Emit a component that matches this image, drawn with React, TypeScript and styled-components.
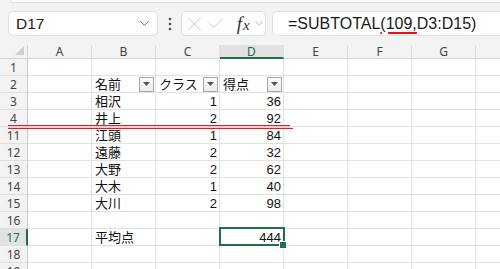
import styled, { createGlobalStyle } from "styled-components";
import { ChevronDown, X, Check } from "lucide-react";

const GlobalStyle = createGlobalStyle`
  html, body {
    margin: 0;
    padding: 0;
    background: #f3f3f3;
  }
  * {
    box-sizing: border-box;
  }
`;

type Row = {
  num: number;
  b?: string;
  c?: string;
  d?: string;
  header?: boolean;
  active?: boolean;
};

const rows: Row[] = [
  { num: 1 },
  { num: 2, b: "名前", c: "クラス", d: "得点", header: true },
  { num: 3, b: "相沢", c: "1", d: "36" },
  { num: 4, b: "井上", c: "2", d: "92" },
  { num: 11, b: "江頭", c: "1", d: "84" },
  { num: 12, b: "遠藤", c: "2", d: "32" },
  { num: 13, b: "大野", c: "2", d: "62" },
  { num: 14, b: "大木", c: "1", d: "40" },
  { num: 15, b: "大川", c: "2", d: "98" },
  { num: 16 },
  { num: 17, b: "平均点", d: "444", active: true },
  { num: 18 },
  { num: 19 },
];

// the last column (H) is mostly off-screen, its letter is not visible
const columns = ["A", "B", "C", "D", "E", "F", "G", ""];

export default function App() {
  return (
    <Page>
      <GlobalStyle />
      <RibbonEdge />
      <FormulaRow>
        <NameBox>
          <span>D17</span>
          <ChevronDown size={15} strokeWidth={1.4} color="#555" />
        </NameBox>
        <Dots viewBox="0 0 4 14" width={4} height={14}>
          <circle cx="2" cy="2" r="1.3" />
          <circle cx="2" cy="7" r="1.3" />
          <circle cx="2" cy="12" r="1.3" />
        </Dots>
        <FormulaTools>
          <X size={26} strokeWidth={0.95} color="#c4c4c4" />
          <Check size={21} strokeWidth={1.1} color="#c4c4c4" />
          <Fx>
            f<sub>x</sub>
          </Fx>
          <ChevronDown size={13} strokeWidth={1.4} color="#999" />
        </FormulaTools>
        <FormulaInput>
          =SUBTOTAL<Marked>(109,</Marked>D3:D15)
        </FormulaInput>
      </FormulaRow>

      <Sheet>
        <Corner>
          <svg width="9" height="9" viewBox="0 0 9 9">
            <polygon points="9,0 9,9 0,9" fill="#cfcfcf" />
          </svg>
        </Corner>
        {columns.map((col, i) => (
          <ColHeader key={i} $active={col === "D"}>
            {col}
          </ColHeader>
        ))}

        {rows.map((row) => (
          <RowFragment key={row.num} row={row} />
        ))}

        <HiddenRowsMark width="290" height="6" viewBox="0 0 290 6">
          <rect x="0" y="1" width="283" height="3" fill="#f6caca" />
          <line x1="0" y1="0.5" x2="282" y2="0.5" stroke="#e02020" />
          <line x1="0" y1="3.5" x2="285" y2="3.5" stroke="#e02020" />
        </HiddenRowsMark>
      </Sheet>
    </Page>
  );
}

function RowFragment({ row }: { row: Row }) {
  return (
    <>
      <RowHeader $active={row.active}>{row.num}</RowHeader>
      <Cell />
      <Cell>
        {row.b}
        {row.header && <FilterButton />}
      </Cell>
      <Cell $right={!row.header}>
        {row.c}
        {row.header && <FilterButton />}
      </Cell>
      <Cell $right={!row.header} $selected={row.active}>
        {row.d}
        {row.header && <FilterButton />}
      </Cell>
      <Cell />
      <Cell />
      <Cell />
      <Cell />
    </>
  );
}

function FilterButton() {
  return (
    <DropButton>
      <svg width="7" height="4" viewBox="0 0 7 4">
        <polygon points="0,0 7,0 3.5,4" fill="#555" />
      </svg>
    </DropButton>
  );
}

const Page = styled.div`
  width: 500px;
  height: 269px;
  overflow: hidden;
  background: #f3f3f3;
  font-family: "Liberation Sans", Arial, sans-serif;
`;

const RibbonEdge = styled.div`
  height: 3px;
  margin-left: 10px;
  background: #ffffff;
  border-left: 1px solid #dcdcdc;
  border-bottom: 1px solid #dcdcdc;
  border-bottom-left-radius: 4px;
`;

const FormulaRow = styled.div`
  display: flex;
  align-items: center;
  height: 42px;
  padding: 0 0 1px 8px;
`;

const NameBox = styled.div`
  display: flex;
  align-items: center;
  justify-content: space-between;
  width: 150px;
  height: 25px;
  padding: 0 5px 0 7px;
  background: #ffffff;
  border: 1px solid #dedede;
  border-radius: 5px;
  font-size: 15.5px;
  color: #1a1a1a;
`;

const Dots = styled.svg`
  fill: #4a4a4a;
  margin: 0 9px 0 10px;
`;

const FormulaTools = styled.div`
  display: flex;
  align-items: center;
  width: 85px;
  height: 25px;
  background: #ffffff;
  border: 1px solid #dedede;
  border-radius: 5px;

  svg:nth-child(2) {
    margin-left: -1px;
  }
`;

const Fx = styled.span`
  font-family: "Liberation Serif", "Times New Roman", serif;
  font-style: italic;
  font-size: 19px;
  color: #333333;
  margin: 0 3px 0 11px;
  line-height: 1;

  sub {
    font-size: 15px;
    vertical-align: 0;
    margin-left: 1px;
  }
`;

const FormulaInput = styled.div`
  flex: 1;
  height: 25px;
  margin-left: 6px;
  padding-left: 15px;
  display: flex;
  align-items: center;
  background: #ffffff;
  border: 1px solid #dedede;
  border-right: none;
  border-radius: 5px 0 0 5px;
  font-size: 16px;
  color: #1a1a1a;
  white-space: nowrap;
`;

const Marked = styled.span`
  text-decoration: underline;
  text-decoration-color: #e81010;
  text-decoration-thickness: 2px;
  text-underline-offset: 3px;
`;

const Sheet = styled.div`
  position: relative;
  display: grid;
  grid-template-columns: 28px repeat(8, 64px);
  grid-template-rows: 14px;
  grid-auto-rows: 17px;
  background: #ffffff;
`;

const Corner = styled.div`
  display: flex;
  align-items: flex-end;
  justify-content: flex-end;
  padding: 0 3px 3px 0;
  background: #f3f3f3;
  border-right: 1px solid #d4d4d4;
  border-bottom: 1px solid #d4d4d4;
`;

const ColHeader = styled.div<{ $active?: boolean }>`
  display: flex;
  align-items: center;
  justify-content: center;
  font-family: "Noto Sans", "Liberation Sans", sans-serif;
  font-size: 12px;
  color: ${(p) => (p.$active ? "#1e6e42" : "#444444")};
  background: ${(p) => (p.$active ? "#e2e2e2" : "#f3f3f3")};
  border-right: 1px solid #dedede;
  border-bottom: ${(p) => (p.$active ? "2px solid #1e7145" : "1px solid #d4d4d4")};
`;

const RowHeader = styled.div<{ $active?: boolean }>`
  display: flex;
  align-items: center;
  justify-content: center;
  padding-top: 1px;
  overflow: hidden;
  font-family: "Noto Sans", "Liberation Sans", sans-serif;
  font-size: 12px;
  color: ${(p) => (p.$active ? "#1e6e42" : "#444444")};
  background: ${(p) => (p.$active ? "#e2e2e2" : "#f3f3f3")};
  border-right: ${(p) => (p.$active ? "2px solid #1e7145" : "1px solid #c8c8c8")};
  border-bottom: 1px solid #dedede;
`;

const Cell = styled.div<{ $right?: boolean; $selected?: boolean }>`
  position: relative;
  display: flex;
  align-items: flex-end;
  justify-content: ${(p) => (p.$right ? "flex-end" : "flex-start")};
  padding: 0 2px 0 3px;
  font-family: "Liberation Sans", "Noto Sans CJK JP", sans-serif;
  font-size: 13px;
  line-height: 15px;
  color: #111111;
  white-space: nowrap;
  border-right: 1px solid #e1e1e1;
  border-bottom: 1px solid #e1e1e1;

  ${(p) =>
    p.$selected &&
    `
    &::after {
      content: "";
      position: absolute;
      top: -2px;
      left: -1px;
      right: -2px;
      bottom: -1px;
      border: 2px solid #1e7145;
      pointer-events: none;
    }
    &::before {
      content: "";
      position: absolute;
      right: -4px;
      bottom: -4px;
      width: 6px;
      height: 6px;
      background: #1e7145;
      border: 1px solid #ffffff;
      z-index: 2;
    }
  `}
`;

const DropButton = styled.div`
  display: flex;
  align-items: center;
  justify-content: center;
  align-self: center;
  width: 15px;
  height: 15px;
  margin: 0 -1px 0 auto;
  background: linear-gradient(#fbfbfb, #ececec);
  border: 1px solid #a6a6a6;
`;

const HiddenRowsMark = styled.svg`
  position: absolute;
  left: 8px;
  top: 80px;
  pointer-events: none;
`;
